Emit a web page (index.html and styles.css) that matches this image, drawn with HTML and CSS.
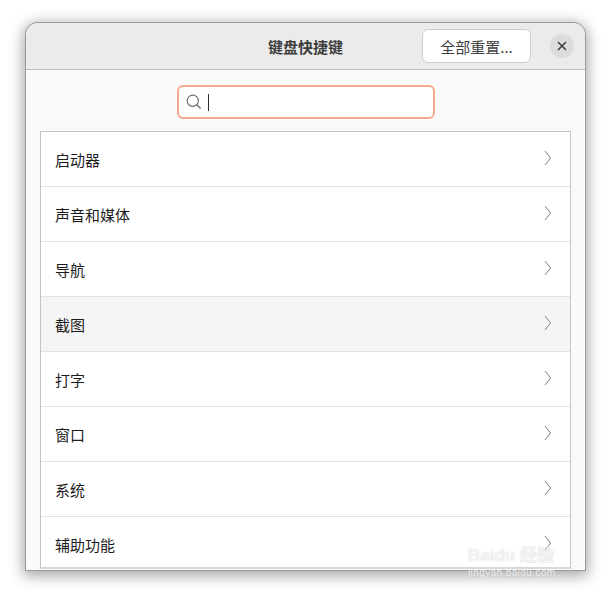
FILE: index.html
```html
<!DOCTYPE html>
<html lang="zh-CN">
<head>
    <meta charset="UTF-8">
    <meta name="viewport" content="width=device-width, initial-scale=1.0">
    <title>键盘快捷键</title>
    <link rel="stylesheet" href="styles.css">
</head>
<body>

<div class="window">
    <header class="titlebar">
        <h1 class="title">键盘快捷键</h1>
        <button class="btn-reset">全部重置...</button>
        <button class="btn-close" aria-label="关闭">
            <svg width="10" height="10" viewBox="0 0 10 10"><path d="M1 1L9 9M9 1L1 9" stroke="#3d3d3d" stroke-width="1.6" fill="none"/></svg>
        </button>
    </header>

    <div class="content">
        <div class="search">
            <svg class="search-icon" width="16" height="16" viewBox="0 0 16 16"><circle cx="6.8" cy="6.8" r="5.6" stroke="#707070" stroke-width="1.2" fill="none"/><path d="M10.8 10.8L14.6 14.6" stroke="#707070" stroke-width="1.4" fill="none"/></svg>
            <span class="caret"></span>
        </div>

        <ul class="list">
            <li class="row">启动器<svg class="chevron" width="8" height="16" viewBox="0 0 8 16"><path d="M1 1L6.6 8L1 15" stroke="#808080" stroke-width="1" fill="none"/></svg></li>
            <li class="row">声音和媒体<svg class="chevron" width="8" height="16" viewBox="0 0 8 16"><path d="M1 1L6.6 8L1 15" stroke="#808080" stroke-width="1" fill="none"/></svg></li>
            <li class="row">导航<svg class="chevron" width="8" height="16" viewBox="0 0 8 16"><path d="M1 1L6.6 8L1 15" stroke="#808080" stroke-width="1" fill="none"/></svg></li>
            <li class="row hover">截图<svg class="chevron" width="8" height="16" viewBox="0 0 8 16"><path d="M1 1L6.6 8L1 15" stroke="#808080" stroke-width="1" fill="none"/></svg></li>
            <li class="row">打字<svg class="chevron" width="8" height="16" viewBox="0 0 8 16"><path d="M1 1L6.6 8L1 15" stroke="#808080" stroke-width="1" fill="none"/></svg></li>
            <li class="row">窗口<svg class="chevron" width="8" height="16" viewBox="0 0 8 16"><path d="M1 1L6.6 8L1 15" stroke="#808080" stroke-width="1" fill="none"/></svg></li>
            <li class="row">系统<svg class="chevron" width="8" height="16" viewBox="0 0 8 16"><path d="M1 1L6.6 8L1 15" stroke="#808080" stroke-width="1" fill="none"/></svg></li>
            <li class="row">辅助功能<svg class="chevron" width="8" height="16" viewBox="0 0 8 16"><path d="M1 1L6.6 8L1 15" stroke="#808080" stroke-width="1" fill="none"/></svg></li>
        </ul>
    </div>
</div>

<div class="watermark">
    <div class="wm-logo">Bai<span class="wm-du">du</span> 经验</div>
    <div class="wm-url">jingyan.baidu.com</div>
</div>

</body>
</html>
```

FILE: styles.css
```css
body {
    font-family: "Noto Sans CJK SC", "Noto Sans", sans-serif;
    background-color: #ffffff;
    margin: 0;
    padding: 0;
    height: 599px;
    overflow: hidden;
    position: relative;
}
.window {
    width: 559px;
    height: 547px;
    margin: 23px 0 0 26px;
    background-color: #fafafa;
    border-radius: 12px 12px 0 0;
    box-shadow: 0 0 0 1px #9a9a9a, 0 3px 14px 3px rgba(0, 0, 0, 0.35);
    overflow: hidden;
    display: flex;
    flex-direction: column;
}
.titlebar {
    height: 46px;
    flex: none;
    background-color: #ebebeb;
    border-bottom: 1px solid #bdbdbd;
    display: flex;
    align-items: center;
    position: relative;
    justify-content: flex-end;
}
.title {
    position: absolute;
    left: 0;
    right: 0;
    margin: 0;
    text-align: center;
    font-size: 15px;
    font-weight: 700;
    color: #3d3d3d;
}
.btn-reset {
    width: 109px;
    height: 34px;
    margin-right: 19px;
    background-color: #ffffff;
    border: 1px solid #cdcdcd;
    border-radius: 6px;
    font-family: inherit;
    font-size: 15px;
    color: #3d3d3d;
    padding: 0;
    position: relative;
}
.btn-close {
    width: 24px;
    height: 24px;
    margin-right: 11px;
    background-color: #dcdcdc;
    border: none;
    border-radius: 50%;
    padding: 0;
    display: flex;
    align-items: center;
    justify-content: center;
    position: relative;
}
.content {
    flex: 1;
    padding: 15px 14px 0;
    display: flex;
    flex-direction: column;
    align-items: center;
    min-height: 0;
}
.search {
    width: 258px;
    height: 34px;
    box-sizing: border-box;
    flex: none;
    background-color: #ffffff;
    border: 2px solid #f5a78f;
    border-radius: 6px;
    display: flex;
    align-items: center;
    padding-left: 7px;
    gap: 6px;
}
.caret {
    width: 1px;
    height: 17px;
    background-color: #2e2e2e;
}
.list {
    list-style: none;
    margin: 12px 0 0;
    padding: 0;
    width: 531px;
    box-sizing: border-box;
    flex: none;
    height: 438px;
    background-color: #ffffff;
    border: 1px solid #c4c4c4;
    border-bottom: 2px solid #d8d8d8;
    overflow: hidden;
}
.row {
    height: 54px;
    border-bottom: 1px solid #e2e2e2;
    display: flex;
    align-items: center;
    justify-content: space-between;
    padding: 0 18px 0 14px;
    font-size: 15px;
    color: #1c1c1c;
}
.row.hover {
    background-color: #f5f5f5;
}
.chevron {
    flex: none;
    margin-top: -2px;
}
.watermark {
    position: absolute;
    left: 468px;
    top: 546px;
    color: rgba(255, 255, 255, 0.8);
    text-shadow: 0 0 1px rgba(160, 160, 160, 0.6);
    font-family: "Liberation Sans", sans-serif;
    white-space: nowrap;
}
.wm-logo {
    font-size: 17px;
    font-weight: 700;
    line-height: 20px;
}
.wm-url {
    font-size: 10px;
    line-height: 14px;
    letter-spacing: 0.4px;
}
```
